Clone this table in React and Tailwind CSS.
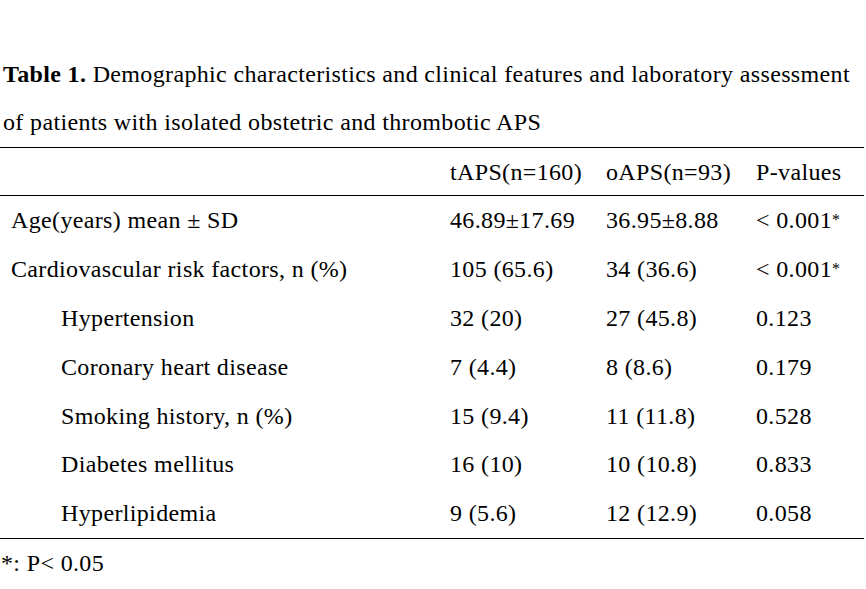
import React from 'react';

const rows = [
  { label: 'Age(years) mean ± SD', t: '46.89±17.69', o: '36.95±8.88', p: '< 0.001', star: true },
  { label: 'Cardiovascular risk factors, n (%)', t: '105 (65.6)', o: '34 (36.6)', p: '< 0.001', star: true },
  { label: 'Hypertension', t: '32 (20)', o: '27 (45.8)', p: '0.123', indent: true },
  { label: 'Coronary heart disease', t: '7 (4.4)', o: '8 (8.6)', p: '0.179', indent: true },
  { label: 'Smoking history, n (%)', t: '15 (9.4)', o: '11 (11.8)', p: '0.528', indent: true },
  { label: 'Diabetes mellitus', t: '16 (10)', o: '10 (10.8)', p: '0.833', indent: true },
  { label: 'Hyperlipidemia', t: '9 (5.6)', o: '12 (12.9)', p: '0.058', indent: true },
];

const cols = 'grid grid-cols-[450px_156px_150px_1fr] items-center';

export default function App() {
  return (
    <div className="w-[866px] h-[589px] bg-white text-black overflow-hidden font-['Liberation_Serif','Times_New_Roman',serif] text-[24px] tracking-[0.35px]">
      {/* caption */}
      <div className="pt-[50px] pl-[3px] leading-[48px] whitespace-nowrap">
        <p>
          <span className="font-bold">Table 1.</span> Demographic characteristics and clinical features and laboratory assessment
        </p>
        <p>of patients with isolated obstetric and thrombotic APS</p>
      </div>

      <div className="mt-[1px] w-[864px] border-t border-black">
        {/* header */}
        <div className={`${cols} h-[48px] border-b border-black`}>
          <div />
          <div>tAPS(n=160)</div>
          <div>oAPS(n=93)</div>
          <div>P-values</div>
        </div>

        {/* body */}
        <div className="border-b border-black">
          {rows.map((r) => (
            <div key={r.label} className={`${cols} h-[48.8px] whitespace-nowrap`}>
              <div className={r.indent ? 'pl-[61px]' : 'pl-[11px]'}>{r.label}</div>
              <div>{r.t}</div>
              <div>{r.o}</div>
              <div>
                {r.p}
                {r.star && <sup className="text-[16px] relative -top-[3px]">*</sup>}
              </div>
            </div>
          ))}
        </div>

        <div className="h-[49px] flex items-center pl-[1px]">*: P&lt; 0.05</div>
      </div>
    </div>
  );
}
